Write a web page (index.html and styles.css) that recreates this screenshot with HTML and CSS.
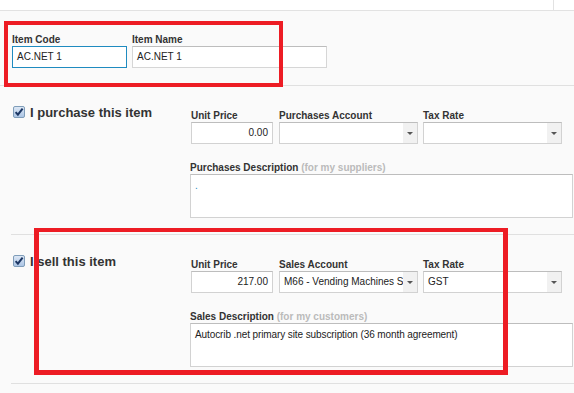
FILE: index.html
```html
<!DOCTYPE html>
<html>
<head>
<meta charset="utf-8">
<link rel="stylesheet" href="styles.css">
</head>
<body>
<div class="topbar"><div class="topbar-main"></div><div class="topbar-side"></div></div>

<section class="codes">
  <div class="field">
    <label class="lbl">Item Code</label>
    <div class="input code-input focused">AC.NET 1</div>
  </div>
  <div class="field">
    <label class="lbl">Item Name</label>
    <div class="input name-input">AC.NET 1</div>
  </div>
</section>

<section class="block">
  <div class="check-col">
    <svg class="chk" width="12" height="12" viewBox="0 0 12 12"><defs><linearGradient id="g1" x1="0" y1="0" x2="0" y2="1"><stop offset="0" stop-color="#dfe9f6"/><stop offset="1" stop-color="#a9c3e4"/></linearGradient></defs><rect x="0.5" y="0.5" width="11" height="11" rx="1.5" fill="url(#g1)" stroke="#7f9db9"/><path d="M2.6 6.1 L4.9 8.6 L9.6 2.6" fill="none" stroke="#1c3764" stroke-width="2"/></svg>
    <span class="check-label">I purchase this item</span>
  </div>
  <div class="fields">
    <div class="row">
      <div class="field">
        <label class="lbl">Unit Price</label>
        <div class="input price">0.00</div>
      </div>
      <div class="field">
        <label class="lbl">Purchases Account</label>
        <div class="input select"><span class="sel-text"></span><span class="arrow"></span></div>
      </div>
      <div class="field">
        <label class="lbl">Tax Rate</label>
        <div class="input select"><span class="sel-text"></span><span class="arrow"></span></div>
      </div>
    </div>
    <div class="field desc">
      <label class="lbl">Purchases Description <span class="hint">(for my suppliers)</span></label>
      <div class="input area"><span class="dot">.</span></div>
    </div>
  </div>
</section>

<section class="block">
  <div class="check-col">
    <svg class="chk" width="12" height="12" viewBox="0 0 12 12"><defs><linearGradient id="g2" x1="0" y1="0" x2="0" y2="1"><stop offset="0" stop-color="#dfe9f6"/><stop offset="1" stop-color="#a9c3e4"/></linearGradient></defs><rect x="0.5" y="0.5" width="11" height="11" rx="1.5" fill="url(#g2)" stroke="#7f9db9"/><path d="M2.6 6.1 L4.9 8.6 L9.6 2.6" fill="none" stroke="#1c3764" stroke-width="2"/></svg>
    <span class="check-label">I sell this item</span>
  </div>
  <div class="fields">
    <div class="row">
      <div class="field">
        <label class="lbl">Unit Price</label>
        <div class="input price">217.00</div>
      </div>
      <div class="field">
        <label class="lbl">Sales Account</label>
        <div class="input select"><span class="sel-text">M66 - Vending Machines Sc</span><span class="arrow"></span></div>
      </div>
      <div class="field">
        <label class="lbl">Tax Rate</label>
        <div class="input select"><span class="sel-text">GST</span><span class="arrow"></span></div>
      </div>
    </div>
    <div class="field desc">
      <label class="lbl">Sales Description <span class="hint">(for my customers)</span></label>
      <div class="input area">Autocrib .net primary site subscription (36 month agreement)</div>
    </div>
  </div>
</section>

<div class="highlight hl-1"></div>
<div class="highlight hl-2"></div>
</body>
</html>
```

FILE: styles.css
```css
html, body {
  margin: 0;
  padding: 0;
}
body {
  background: #fafafa;
  font-family: "Liberation Sans", Arial, sans-serif;
  color: #333;
  position: relative;
  width: 574px;
  height: 393px;
  overflow: hidden;
}
.topbar {
  display: flex;
  height: 10px;
  background: #fff;
  border-bottom: 1px solid #e2e2e2;
}
.topbar-main { flex: 0 0 553px; }
.topbar-side { flex: 1; border-left: 1px solid #e2e2e2; }

.lbl {
  display: block;
  font-size: 10px;
  font-weight: bold;
  line-height: 13px;
  height: 13px;
  white-space: nowrap;
  color: #333;
}
.hint { color: #bbb; }

.input {
  box-sizing: border-box;
  height: 22px;
  background: #fff;
  border: 1px solid #d2d2d2;
  border-top-color: #bdbdbd;
  font-size: 10px;
  line-height: 20px;
  padding: 0 4px;
  color: #222;
  white-space: nowrap;
  overflow: hidden;
}

.codes {
  display: flex;
  gap: 5px;
  padding: 22px 0 17px 12px;
  border-bottom: 1px solid #e0e0e0;
}
.code-input { width: 115px; }
.focused { border-color: #1f8bc0; }
.name-input { width: 195px; border-color: #d6d6d6; border-top-color: #bdbdbd; }

.block {
  display: flex;
  margin-left: 11px;
  padding: 23px 0 16px 0;
  border-bottom: 1px solid #e0e0e0;
}
.check-col {
  flex: 0 0 179px;
  display: flex;
  align-items: flex-start;
  gap: 5px;
  padding-left: 2px;
  margin-top: -4px;
  box-sizing: border-box;
}
.chk { flex: none; margin-top: 1px; }
.check-label {
  font-size: 13px;
  font-weight: bold;
  line-height: 15px;
  color: #333;
}
.fields {
  flex: 1;
  display: flex;
  flex-direction: column;
}
.row {
  display: flex;
  gap: 6px;
  margin-left: 1px;
}
.price { width: 82px; text-align: right; padding-right: 4px; }
.select {
  width: 139px;
  display: flex;
  padding: 0;
}
.row .field:last-child { margin-left: -1px; }
.sel-text {
  flex: 1;
  overflow: hidden;
  padding-left: 4px;
  white-space: nowrap;
}
.arrow {
  flex: 0 0 14px;
  background: #f1f1f1;
  position: relative;
}
.arrow::after {
  content: "";
  position: absolute;
  left: 4px;
  top: 9px;
  border-left: 3px solid transparent;
  border-right: 3px solid transparent;
  border-top: 3px solid #555;
}
.desc { margin-top: 17px; }
.area {
  width: 383px;
  height: 44px;
  line-height: 13px;
  padding: 4px 4px;
  white-space: normal;
  letter-spacing: -0.1px;
}
.dot { color: #1f8bc0; }

.highlight {
  position: absolute;
  border: 4px solid #ed1c24;
  box-sizing: border-box;
  pointer-events: none;
}
.hl-1 { left: 4px; top: 21px; width: 279px; height: 66px; }
.hl-2 { left: 34px; top: 228px; width: 474px; height: 147px; border-width: 4px 5px 5px 5px; }
```
